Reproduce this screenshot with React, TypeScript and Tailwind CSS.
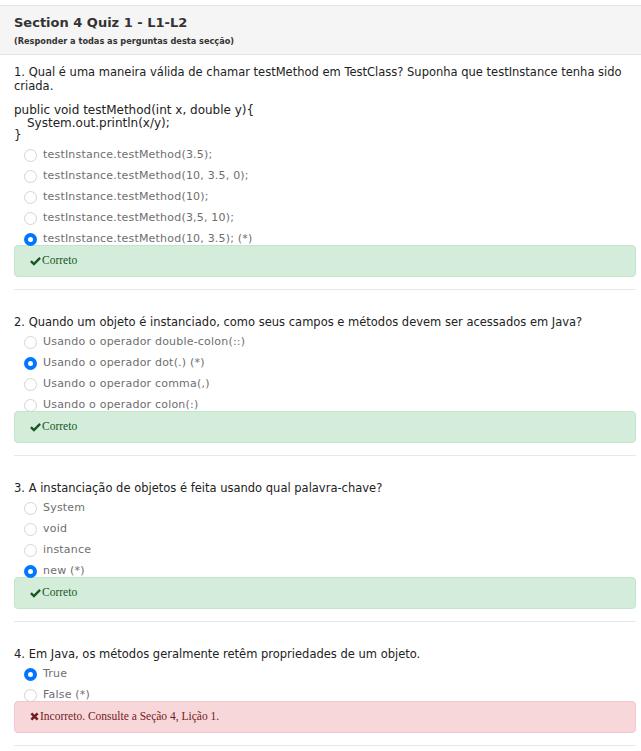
import React from "react";

type Question = {
  num: number;
  text: React.ReactNode;
  options: string[];
  selected: number;
  correct: boolean;
  feedback: string;
};

const questions: Question[] = [
  {
    num: 1,
    text: (
      <>
        <p className="leading-[14px] text-[11.5px]">
          1. Qual é uma maneira válida de chamar testMethod em TestClass? Suponha que testInstance tenha sido criada.
        </p>
        <div className="mt-[11px] leading-[12.5px] text-[12px]">
          <div>public void testMethod(int x, double y){"{"}</div>
          <div className="pl-[13px]">System.out.println(x/y);</div>
          <div>{"}"}</div>
        </div>
      </>
    ),
    options: [
      "testInstance.testMethod(3.5);",
      "testInstance.testMethod(10, 3.5, 0);",
      "testInstance.testMethod(10);",
      "testInstance.testMethod(3,5, 10);",
      "testInstance.testMethod(10, 3.5); (*)",
    ],
    selected: 4,
    correct: true,
    feedback: "Correto",
  },
  {
    num: 2,
    text: (
      <p className="leading-[14px] text-[11.5px]">
        2. Quando um objeto é instanciado, como seus campos e métodos devem ser acessados em Java?
      </p>
    ),
    options: [
      "Usando o operador double-colon(::)",
      "Usando o operador dot(.) (*)",
      "Usando o operador comma(,)",
      "Usando o operador colon(:)",
    ],
    selected: 1,
    correct: true,
    feedback: "Correto",
  },
  {
    num: 3,
    text: <p className="leading-[14px] text-[11.5px]">3. A instanciação de objetos é feita usando qual palavra-chave?</p>,
    options: ["System", "void", "instance", "new (*)"],
    selected: 3,
    correct: true,
    feedback: "Correto",
  },
  {
    num: 4,
    text: <p className="leading-[14px] text-[11.5px]">4. Em Java, os métodos geralmente retêm propriedades de um objeto.</p>,
    options: ["True", "False (*)"],
    selected: 0,
    correct: false,
    feedback: "Incorreto. Consulte a Seção 4, Lição 1.",
  },
];

function Radio({ checked }: { checked: boolean }) {
  if (checked) {
    return (
      <span className="w-[13px] h-[13px] rounded-full bg-[#0075ff] flex items-center justify-center shrink-0">
        <span className="w-[5px] h-[5px] rounded-full bg-white" />
      </span>
    );
  }
  return <span className="w-[13px] h-[13px] rounded-full border border-[#d4d4d4] bg-white shrink-0" />;
}

function Feedback({ ok, text }: { ok: boolean; text: string }) {
  return (
    <div
      className={
        ok
          ? "mt-[-5px] h-[32px] flex items-center pl-[15px] rounded-[4px] border border-[#c3e6cb] bg-[#d4edda] text-[#155724]"
          : "mt-[-5px] h-[32px] flex items-center pl-[15px] rounded-[4px] border border-[#f5c6cb] bg-[#f8d7da] text-[#721c24]"
      }
      style={{ fontFamily: '"Liberation Serif", serif' }}
    >
      {ok ? (
        <svg width="11" height="10" viewBox="0 0 12 10" className="mr-[1px]">
          <path d="M1 5.2 L4.3 8.4 L11 1.6" fill="none" stroke="currentColor" strokeWidth="2.6" />
        </svg>
      ) : (
        <svg width="9" height="9" viewBox="0 0 10 10" className="mr-[1px]">
          <path d="M1.5 1.5 L8.5 8.5 M8.5 1.5 L1.5 8.5" fill="none" stroke="currentColor" strokeWidth="2.8" />
        </svg>
      )}
      <span className="text-[11.5px]">{text}</span>
    </div>
  );
}

export default function App() {
  return (
    <div className="bg-white min-h-[751px] pt-[5px] text-[#333]" style={{ fontFamily: '"DejaVu Sans", Verdana, sans-serif' }}>
      <div className="bg-[#f5f5f5] border-y border-[#e3e3e3] h-[50px] pl-[14px] pt-[9px]">
        <h1 className="text-[13px] font-bold leading-[16px] text-[#333]">Section 4 Quiz 1 - L1-L2</h1>
        <p className="text-[8.2px] font-bold leading-[12px] mt-[4px] text-[#333]">(Responder a todas as perguntas desta secção)</p>
      </div>

      <div className="pl-[14px] pr-[5px]">
        {questions.map((q, qi) => (
          <div key={q.num} className={qi === 0 ? "pt-[10px]" : "pt-[25px]"}>
            <div className="text-[#222] pr-[10px]">{q.text}</div>
            <div className="mt-[3px]">
              {q.options.map((o, i) => (
                <div key={i} className="h-[21px] flex items-center pl-[10px] gap-[6px]">
                  <Radio checked={i === q.selected} />
                  <span className="text-[11px] text-[#6e6e6e] tracking-[0.2px]">{o}</span>
                </div>
              ))}
            </div>
            <Feedback ok={q.correct} text={q.feedback} />
            <div className="mt-[12px] border-t border-[#e8e8e8]" />
          </div>
        ))}
      </div>
    </div>
  );
}
